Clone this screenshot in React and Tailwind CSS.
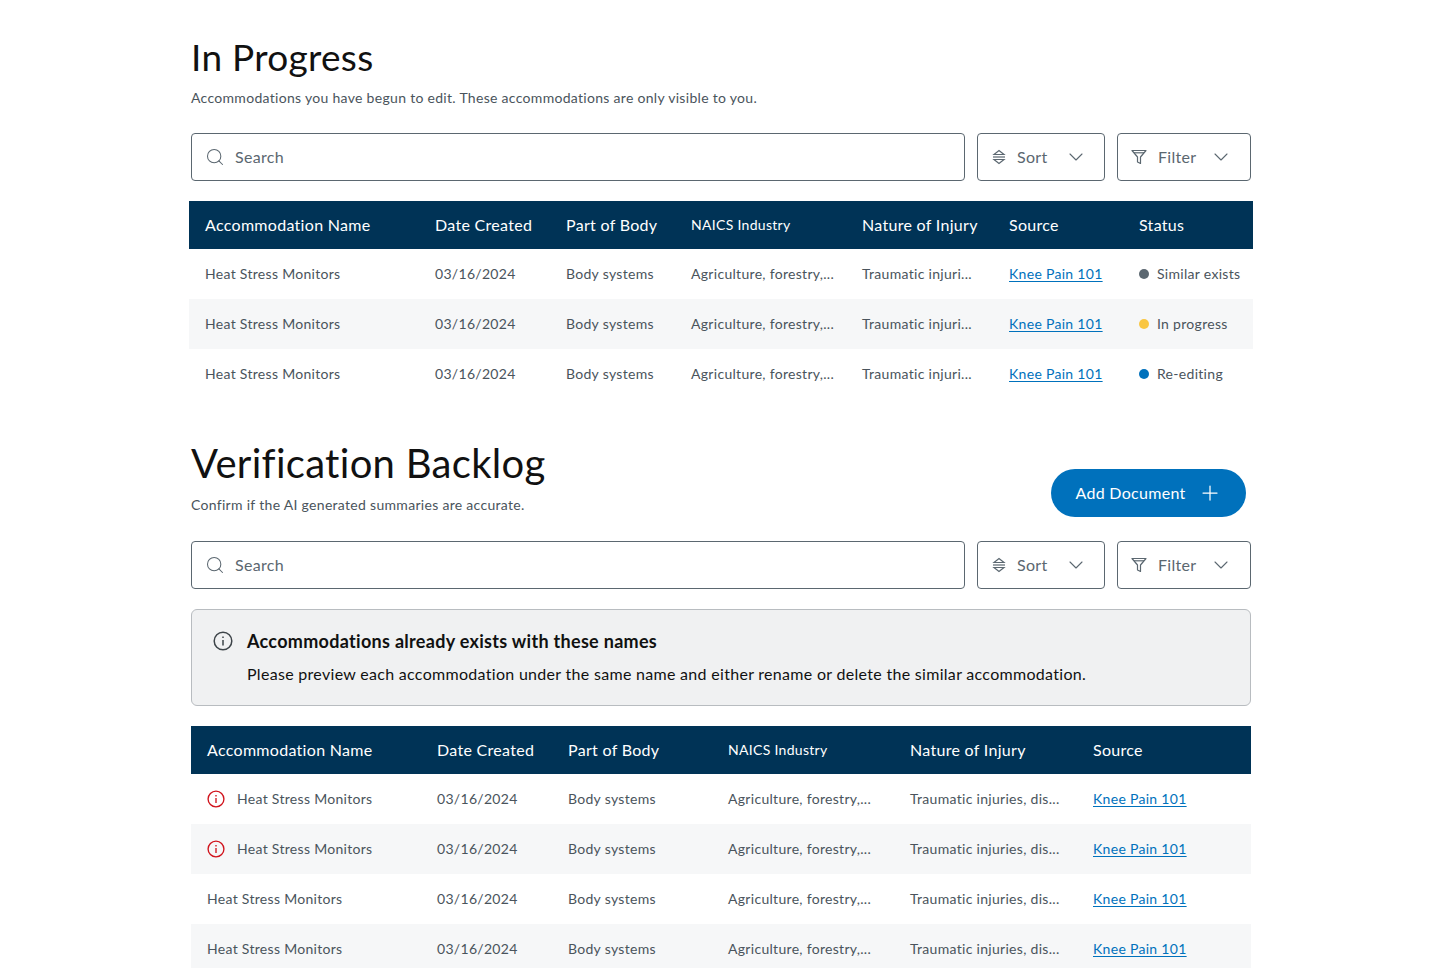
import { Search, ChevronDown, Plus } from "lucide-react";

const topCols = "grid-cols-[230px_131px_125px_171px_147px_130px_130px]";
const bottomCols = "grid-cols-[230px_131px_160px_182px_183px_174px]";

const statuses = [
  { label: "Similar exists", dot: "bg-[#5b6770]" },
  { label: "In progress", dot: "bg-[#f9c642]" },
  { label: "Re-editing", dot: "bg-[#0071bc]" },
];

function SortIcon() {
  return (
    <svg width="14" height="16" viewBox="0 0 14 16" fill="none" stroke="#5b6770" strokeWidth="1.2">
      <path d="M2 5.5 7 1.5l5 4H2Z" />
      <path d="M1 8h12" />
      <path d="M2 10.5h10l-5 4-5-4Z" />
    </svg>
  );
}

function FilterIcon() {
  return (
    <svg width="16" height="16" viewBox="0 0 16 16" fill="none" stroke="#5b6770" strokeWidth="1.2" strokeLinejoin="round">
      <path d="M1 1.5h14L9.5 8v6.5l-3-1.5V8L1 1.5Z" />
      <path d="M3 3.8h10" />
    </svg>
  );
}

function InfoIcon({ color, size }) {
  return (
    <svg width={size} height={size} viewBox="0 0 20 20" fill="none" stroke={color} strokeWidth="1.5">
      <circle cx="10" cy="10" r="8.8" />
      <path d="M10 9v5.5" />
      <path d="M10 5.5v1.6" />
    </svg>
  );
}

function Toolbar() {
  return (
    <div className="flex gap-3 h-12">
      <div className="flex-1 flex items-center border border-[#5b6770] rounded pl-[13px] gap-2.5">
        <Search className="w-[20px] h-[20px] text-[#5b6770]" strokeWidth={1.25} />
        <span className="text-[#5b6770] text-base">Search</span>
      </div>
      <div className="w-[128px] flex items-center border border-[#5b6770] rounded pl-[14px] text-[#5b6770]">
        <SortIcon />
        <span className="ml-[11px] text-base">Sort</span>
        <ChevronDown className="ml-auto mr-[16px] w-[24px] h-[24px]" strokeWidth={1.1} />
      </div>
      <div className="w-[134px] flex items-center border border-[#5b6770] rounded pl-[13px] text-[#5b6770]">
        <FilterIcon />
        <span className="ml-[11px] text-base">Filter</span>
        <ChevronDown className="ml-auto mr-[17px] w-[24px] h-[24px]" strokeWidth={1.1} />
      </div>
    </div>
  );
}

function Header({ cols, labels, naicsClass }) {
  return (
    <div className={`grid ${cols} h-12 items-center bg-[#003356] text-white text-base pl-4`}>
      {labels.map((l) => (
        <div key={l} className={l === "NAICS Industry" ? "text-sm" : ""}>{l}</div>
      ))}
    </div>
  );
}

function Link() {
  return <a className="underline text-[#0071bc] underline-offset-2">Knee Pain 101</a>;
}

export default function App() {
  return (
    <div className="h-[968px] overflow-hidden bg-white font-['Lato','Noto_Sans',sans-serif] tracking-[0.3px]">
      <div className="w-[1060px] mx-auto pt-[33px]">
        <h1 className="text-[37px] leading-[48px] text-[#111]">In Progress</h1>
        <p className="mt-[5px] text-sm leading-[24px] text-[#4a545c]">
          Accommodations you have begun to edit. These accommodations are only visible to you.
        </p>
        <div className="mt-[23px]">
          <Toolbar />
        </div>

        <div className="mt-5 -mx-0.5">
          <Header
            cols={topCols}
            labels={["Accommodation Name", "Date Created", "Part of Body", "NAICS Industry", "Nature of Injury", "Source", "Status"]}
          />
          {statuses.map((s, i) => (
            <div key={s.label} className={`grid ${topCols} h-[50px] items-center pl-4 text-sm text-[#4a545c] ${i === 1 ? "bg-[#f6f7f8]" : ""}`}>
              <div>Heat Stress Monitors</div>
              <div>03/16/2024</div>
              <div>Body systems</div>
              <div>Agriculture, forestry,...</div>
              <div>Traumatic injuri...</div>
              <div><Link /></div>
              <div className="flex items-center gap-2">
                <span className={`w-2.5 h-2.5 rounded-full ${s.dot}`} />
                {s.label}
              </div>
            </div>
          ))}
        </div>

        <div className="mt-[40px] flex items-end justify-between">
          <div>
            <h1 className="text-[40px] leading-[48px] text-[#111]">Verification Backlog</h1>
            <p className="mt-[6px] text-sm leading-[24px] text-[#4a545c]">
              Confirm if the AI generated summaries are accurate.
            </p>
          </div>
          <button className="mr-[5px] mb-[0px] w-[195px] h-12 rounded-full bg-[#0071bc] text-white text-base flex items-center justify-center gap-3">
            Add Document
            <Plus className="w-6 h-6" strokeWidth={1.25} />
          </button>
        </div>

        <div className="mt-6">
          <Toolbar />
        </div>

        <div className="mt-5 h-[97px] rounded-md border border-[#b8bcc0] bg-[#f0f1f2] pl-[21px] pt-[18px] text-[#111]">
          <div className="flex items-center gap-[14px] h-[26px]">
            <InfoIcon color="#3d4449" size={20} />
            <span className="text-lg font-bold">Accommodations already exists with these names</span>
          </div>
          <p className="ml-[34px] mt-[7px] text-base leading-[26px]">
            Please preview each accommodation under the same name and either rename or delete the similar accommodation.
          </p>
        </div>

        <div className="mt-5">
          <Header
            cols={bottomCols}
            labels={["Accommodation Name", "Date Created", "Part of Body", "NAICS Industry", "Nature of Injury", "Source"]}
          />
          {[true, true, false, false].map((warn, i) => (
            <div key={i} className={`grid ${bottomCols} h-[50px] items-center pl-4 text-sm text-[#4a545c] ${i % 2 === 1 ? "bg-[#f6f7f8]" : ""}`}>
              <div className="flex items-center gap-[12px]">
                {warn && <InfoIcon color="#d0121b" size={18} />}
                Heat Stress Monitors
              </div>
              <div>03/16/2024</div>
              <div>Body systems</div>
              <div>Agriculture, forestry,...</div>
              <div>Traumatic injuries, dis...</div>
              <div><Link /></div>
            </div>
          ))}
        </div>
      </div>
    </div>
  );
}
